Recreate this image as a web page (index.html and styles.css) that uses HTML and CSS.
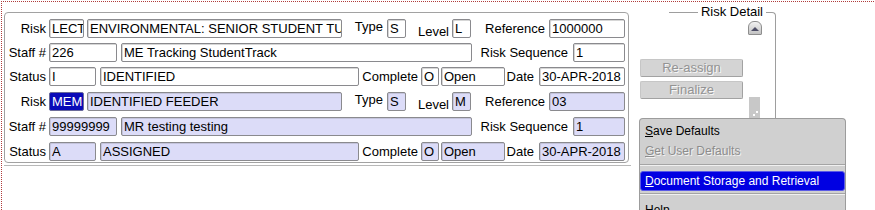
FILE: index.html
```html
<!DOCTYPE html>
<html>
<head>
<meta charset="utf-8">
<title>Risk Detail</title>
<link rel="stylesheet" href="styles.css">
</head>
<body>
<div class="screen">
  <div class="left">
    <div class="panel">
      <div class="group">
        <div class="row">
          <span class="lbl l44">Risk</span>
          <span class="fld f35">LECT</span>
          <span class="fld f255 ml3">ENVIRONMENTAL: SENIOR STUDENT TU</span>
          <span class="lbl l45 up">Type</span>
          <span class="fld f19">S</span>
          <span class="lbl l46 down">Level</span>
          <span class="fld f19">L</span>
          <span class="lbl l78">Reference</span>
          <span class="fld f76">1000000</span>
        </div>
        <div class="row">
          <span class="lbl l44">Staff #</span>
          <span class="fld f68">226</span>
          <span class="fld f351 ml4">ME Tracking StudentTrack</span>
          <span class="lbl l101">Risk Sequence</span>
          <span class="fld f52">1</span>
        </div>
        <div class="row">
          <span class="lbl l44">Status</span>
          <span class="fld f47">I</span>
          <span class="fld f259 ml4">IDENTIFIED</span>
          <span class="lbl l62">Complete</span>
          <span class="fld f18">O</span>
          <span class="fld f64 ml2">Open</span>
          <span class="lbl l34">Date</span>
          <span class="fld f86">30-APR-2018</span>
        </div>
      </div>
      <div class="group current">
        <div class="row">
          <span class="lbl l44">Risk</span>
          <span class="fld f35 sel">MEM</span>
          <span class="fld f255 ml3">IDENTIFIED FEEDER</span>
          <span class="lbl l45 up">Type</span>
          <span class="fld f19">S</span>
          <span class="lbl l46 down">Level</span>
          <span class="fld f19">M</span>
          <span class="lbl l78">Reference</span>
          <span class="fld f76">03</span>
        </div>
        <div class="row">
          <span class="lbl l44">Staff #</span>
          <span class="fld f68">99999999</span>
          <span class="fld f351 ml4">MR testing testing</span>
          <span class="lbl l101">Risk Sequence</span>
          <span class="fld f52">1</span>
        </div>
        <div class="row">
          <span class="lbl l44">Status</span>
          <span class="fld f47">A</span>
          <span class="fld f259 ml4">ASSIGNED</span>
          <span class="lbl l62">Complete</span>
          <span class="fld f18">O</span>
          <span class="fld f64 ml2">Open</span>
          <span class="lbl l34">Date</span>
          <span class="fld f86">30-APR-2018</span>
        </div>
      </div>
    </div>
    <div class="panel-shadow"></div>
  </div>

  <div class="right">
    <div class="rd-frame">
      <div class="rd-head"><span class="rd-title">Risk Detail</span></div>
      <div class="rd-body">
        <div class="btns">
          <div class="btn">Re-assign</div>
          <div class="btn">Finalize</div>
        </div>
        <div class="scroll">
          <div class="scroll-up">
            <svg width="12" height="12" viewBox="0 0 12 12"><polygon points="2,9 6,5 10,9" fill="#4e4e66"/></svg>
          </div>
          <div class="scroll-thumb">
            <svg width="11" height="21" viewBox="0 0 11 21"><rect x="7" y="14" width="2" height="2" fill="#ffffff"/><rect x="4" y="17" width="2" height="2" fill="#ffffff"/></svg>
          </div>
        </div>
      </div>
    </div>
  </div>

  <div class="menu">
    <div class="mi"><u>S</u>ave Defaults</div>
    <div class="mi dis"><u>G</u>et User Defaults</div>
    <div class="msep"></div>
    <div class="mi hl"><u>D</u>ocument Storage and Retrieval</div>
    <div class="msep sep2"></div>
    <div class="mi"><u>H</u>elp</div>
  </div>
</div>
</body>
</html>
```

FILE: styles.css
```css
html, body {
  margin: 0;
  padding: 0;
  overflow: hidden;
  background: #ffffff;
}

body {
  font-family: "Liberation Sans", Arial, sans-serif;
  font-size: 13px;
  color: #000000;
}

.screen {
  position: relative;
  margin: 1px 0 0 1px;
  width: 900px;
  height: 208px;
  overflow: hidden;
  border-top: 1px dotted #b03c3c;
  border-left: 1px dotted #b03c3c;
  display: flex;
  align-items: flex-start;
}

/* left form panel */
.left {
  display: flex;
  flex-direction: column;
}

.panel {
  margin: 10px 0 0 2px;
  width: 625px;
  box-sizing: border-box;
  border: 1px solid #a2a2a2;
  border-radius: 4px;
  padding: 6px 0 1px 0;
  display: flex;
  flex-direction: column;
  gap: 6px;
}

.panel-shadow {
  margin: 2px 0 0 2px;
  width: 627px;
  height: 0;
  border-top: 1px solid #b8b8b8;
}

.group {
  display: flex;
  flex-direction: column;
  gap: 5px;
}

.group.current {
  gap: 6px;
}

.row {
  display: flex;
  align-items: flex-start;
  height: 19px;
}

.lbl {
  box-sizing: border-box;
  height: 19px;
  line-height: 19px;
  text-align: right;
  white-space: nowrap;
  flex: none;
}

.lbl.up { margin-top: -2px; }
.lbl.down { margin-top: 3px; }

.l44 { width: 44px; padding-right: 3px; }
.l45 { width: 45px; padding-right: 4px; }
.l46 { width: 46px; padding-right: 3px; }
.l78 { width: 78px; padding-right: 4px; }
.l101 { width: 101px; padding-right: 5px; }
.l62 { width: 62px; padding-right: 3px; }
.l34 { width: 34px; padding-right: 5px; }

.fld {
  box-sizing: border-box;
  height: 19px;
  line-height: 17px;
  border: 1px solid #8a8a8e;
  border-radius: 2px;
  box-shadow: inset 1px 1px 0 #d6d6d6;
  background: #ffffff;
  padding-left: 2px;
  white-space: nowrap;
  overflow: hidden;
  flex: none;
}

.current .fld {
  background: #dcdcf8;
  box-shadow: inset 1px 1px 0 #c4c4dc;
}

.current .fld.sel {
  background: #0a0ab8;
  color: #ffffff;
  border-color: #6a6a9a;
  box-shadow: none;
}

.ml2 { margin-left: 2px; }
.ml3 { margin-left: 3px; }
.ml4 { margin-left: 4px; }

.f18 { width: 18px; }
.f19 { width: 19px; }
.f35 { width: 35px; }
.f47 { width: 47px; }
.f52 { width: 52px; }
.f64 { width: 64px; }
.f68 { width: 68px; }
.f76 { width: 76px; }
.f86 { width: 86px; }
.f255 { width: 255px; }
.f259 { width: 259px; }
.f351 { width: 351px; }

/* Risk Detail frame */
.right {
  display: flex;
}

.rd-frame {
  margin: 10px 0 0 38px;
  width: 106px;
  height: 105px;
  box-sizing: content-box;
  border-top: 1px solid #9e9e9e;
  border-right: 1px solid #9e9e9e;
  border-top-right-radius: 4px;
}

.rd-head {
  display: flex;
  justify-content: flex-end;
  height: 0;
}

.rd-title {
  background: #ffffff;
  padding: 0 3px;
  margin-right: 9px;
  margin-top: -8px;
  height: 14px;
  line-height: 14px;
  white-space: nowrap;
}

.rd-body {
  display: flex;
  align-items: flex-start;
  height: 105px;
}

.btns {
  margin-left: -29px;
  width: 103px;
  padding-top: 46px;
  display: flex;
  flex-direction: column;
  gap: 4px;
  flex: none;
}

.btn {
  box-sizing: border-box;
  height: 18px;
  line-height: 16px;
  text-align: center;
  background: #d4d4d4;
  border: 1px solid #c6c6c6;
  border-right-color: #a2a2a2;
  border-bottom-color: #a2a2a2;
  border-radius: 2px;
  color: #939393;
  text-shadow: 1px 1px 0 #f8f8f8;
}

.scroll {
  margin-left: 5px;
  width: 14px;
  height: 105px;
  display: flex;
  flex-direction: column;
  justify-content: space-between;
  flex: none;
}

.scroll-up {
  margin-top: 8px;
  width: 14px;
  height: 14px;
  box-sizing: border-box;
  border: 1px solid #8e8e8e;
  border-radius: 6px 6px 1px 1px;
  background: linear-gradient(#f2f2f2, #c2c2c2);
  display: flex;
}

.scroll-thumb {
  margin-left: 1px;
  width: 11px;
  height: 21px;
  background: #c8c8c8;
  display: flex;
}

/* popup menu */
.menu {
  position: absolute;
  left: 637px;
  top: 116px;
  width: 207px;
  height: 110px;
  box-sizing: border-box;
  background: #d0d0d0;
  border: 1px solid #9c9c9c;
  border-bottom: none;
  border-radius: 4px 4px 0 0;
  padding-top: 2px;
  font-size: 12px;
}

.mi {
  height: 20px;
  line-height: 20px;
  padding-left: 5px;
  white-space: nowrap;
  color: #000000;
}

.mi.dis {
  color: #8c8c8c;
  text-shadow: 1px 1px 0 #f2f2f2;
}

.mi.hl {
  box-sizing: border-box;
  line-height: 18px;
  padding-left: 4px;
  background: #0000e2;
  color: #ffffff;
  border: 1px solid #5a5ae6;
  border-radius: 3px;
}

.msep {
  margin: 3px 0 5px 0;
  border-top: 1px solid #a4a4a4;
  border-bottom: 1px solid #f0f0f0;
}

.msep.sep2 {
  margin-top: 2px;
}
```
